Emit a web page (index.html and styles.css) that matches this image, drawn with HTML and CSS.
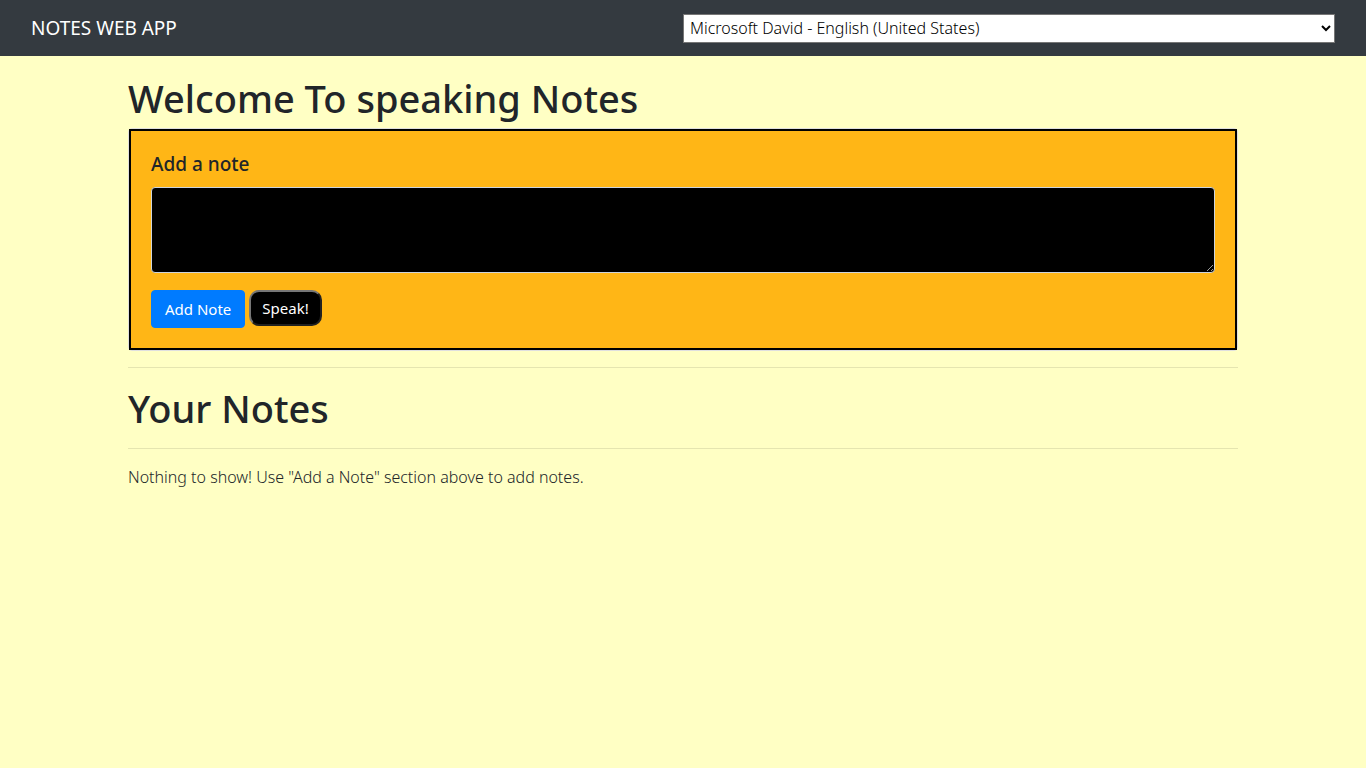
FILE: index.html
```html
<!DOCTYPE html>
<html lang="en">
<head>
<meta charset="utf-8">
<meta name="viewport" content="width=device-width, initial-scale=1">
<title>Notes Web App</title>
<link rel="stylesheet" href="styles.css">
</head>
<body>
<nav class="navbar">
  <a class="brand" href="#">NOTES WEB APP</a>
  <select class="voices" aria-label="Voice">
    <option>Microsoft David - English (United States)</option>
  </select>
</nav>
<main class="container">
  <h1 class="title">Welcome To speaking Notes</h1>
  <section class="card">
    <div class="card-body">
      <label class="card-title" for="note">Add a note</label>
      <textarea class="note-input" id="note" rows="3"></textarea>
      <div class="actions">
        <button class="btn-add" type="button">Add Note</button>
        <button class="btn-speak" type="button">Speak!</button>
      </div>
    </div>
  </section>
  <hr class="rule">
  <h1 class="title">Your Notes</h1>
  <hr class="rule">
  <p class="empty">Nothing to show! Use "Add a Note" section above to add notes.</p>
</main>
</body>
</html>
```
FILE: styles.css
```css
* { box-sizing: border-box; }

body {
  margin: 0;
  background: #ffffc4;
  color: #212529;
  font: 300 16px/24px "Segoe UI", "Noto Sans", "Open Sans", sans-serif;
}

.navbar {
  display: flex;
  align-items: center;
  justify-content: space-between;
  padding: 8px 31px;
  min-height: 56px;
  background: #343a40;
}

.brand {
  color: #fff;
  font-size: 19px;
  font-weight: 400;
  line-height: 30px;
  text-decoration: none;
}

.voices {
  width: 50%;
  height: 29px;
  padding: 0 2px;
  border: 1px solid #767676;
  border-radius: 0;
  background: #fff;
  color: #000;
  font: inherit;
}

.container {
  max-width: 1140px;
  margin: 0 auto;
  padding: 18px 15px;
}

.title {
  margin: 0 0 6px;
  font-size: 38px;
  font-weight: 500;
  line-height: 48px;
}

.card {
  border: 1px solid #dfdfdf;
  border-radius: 4px;
}

.card-body {
  padding: 20px;
  border: 2px solid #000;
  background: #ffb616;
}

.card-title {
  display: block;
  margin-bottom: 10px;
  font-size: 19px;
  font-weight: 500;
  line-height: 26px;
}

.note-input {
  display: block;
  width: 100%;
  height: 86px;
  padding: 6px 12px;
  border: 1px solid #ced4da;
  border-radius: 4px;
  background: #000;
  color: #fff;
  font: inherit;
  resize: vertical;
}

.actions {
  display: flex;
  align-items: flex-start;
  gap: 4px;
  margin-top: 17px;
}

.btn-add {
  height: 38px;
  padding: 0 13px;
  border: 1px solid #007bff;
  border-radius: 4px;
  background: #007bff;
  color: #fff;
  font: inherit;
  font-size: 15px;
  font-weight: 400;
}

.btn-speak {
  height: 36px;
  padding: 0 11px;
  border: 2px outset #767676;
  border-radius: 10px;
  background: #000;
  color: #fff;
  font: inherit;
  font-size: 15px;
  font-weight: 400;
}

.rule {
  margin: 16px 0;
  border: 0;
  border-top: 1px solid rgba(0, 0, 0, 0.1);
}

.empty {
  margin: 0;
}
```
